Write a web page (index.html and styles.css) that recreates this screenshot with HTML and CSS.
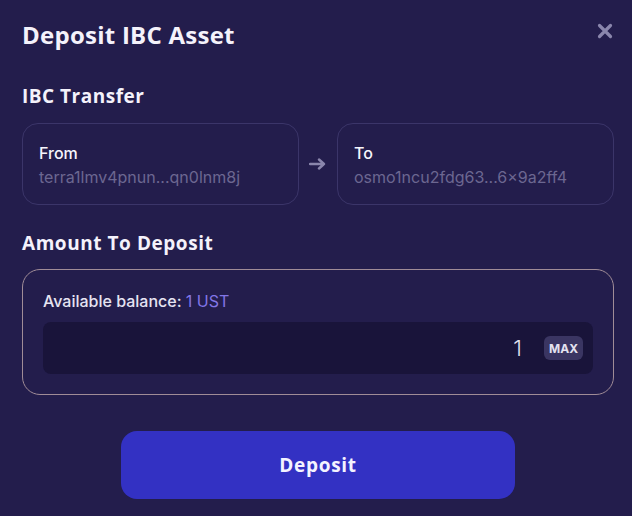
FILE: index.html
```html
<!DOCTYPE html>
<html>
<head>
<meta charset="utf-8">
<link rel="stylesheet" href="styles.css">
</head>
<body>
<div class="modal">
  <div class="header">
    <h1 class="title">Deposit IBC Asset</h1>
    <svg class="close" width="16" height="16" viewBox="0 0 16 16"><path d="M2.5 2.5 L13.5 13.5 M13.5 2.5 L2.5 13.5" stroke="#8a86ac" stroke-width="3.2" stroke-linecap="round"/></svg>
  </div>
  <h2 class="section">IBC Transfer</h2>
  <div class="transfer">
    <div class="card">
      <div class="label">From</div>
      <div class="addr">terra1lmv4pnun...qn0lnm8j</div>
    </div>
    <svg class="arrow" width="18" height="12" viewBox="0 0 18 12"><path d="M1 6 H15 M10 1.5 L15 6 L10 10.5" stroke="#8a86ac" stroke-width="2.4" fill="none" stroke-linecap="round" stroke-linejoin="round"/></svg>
    <div class="card">
      <div class="label">To</div>
      <div class="addr">osmo1ncu2fdg63...6×9a2ff4</div>
    </div>
  </div>
  <h2 class="section amount-title">Amount To Deposit</h2>
  <div class="amount">
    <div class="balance">Available balance: <span class="ust">1 UST</span></div>
    <div class="input">
      <span class="value">1</span>
      <span class="max">MAX</span>
    </div>
  </div>
  <div class="actions">
    <button class="deposit">Deposit</button>
  </div>
</div>
</body>
</html>
```
FILE: styles.css
```css
html, body {
  margin: 0;
  padding: 0;
  background: #231d4c;
}
body {
  width: 632px;
  height: 516px;
  overflow: hidden;
  font-family: Inter, "Noto Sans", sans-serif;
  color: #ffffff;
}
.modal {
  padding: 19px 18px 0 22px;
}
.header {
  display: flex;
  justify-content: space-between;
  align-items: flex-start;
}
.title {
  margin: 0;
  font-family: "Open Sans", sans-serif;
  font-weight: 700;
  font-size: 24px;
  line-height: 31px;
  letter-spacing: 0.25px;
  color: #f4f2fb;
}
.close {
  margin-top: 4px;
  margin-right: 1px;
}
.section {
  margin: 0;
  font-family: "Open Sans", sans-serif;
  font-weight: 700;
  font-size: 19px;
  line-height: 24px;
  letter-spacing: 0.5px;
  color: #f4f2fb;
}
.header + .section {
  margin-top: 34px;
}
.transfer {
  margin-top: 15px;
  display: flex;
  align-items: center;
  gap: 10px;
}
.card {
  flex: 1;
  height: 82px;
  box-sizing: border-box;
  border: 1px solid #3b3569;
  border-radius: 16px;
  padding: 19px 16px 0 16px;
}
.label {
  font-size: 16px;
  font-weight: 500;
  line-height: 20px;
  color: #f6f5fc;
}
.addr {
  margin-top: 4px;
  font-size: 16px;
  line-height: 20px;
  color: #6c6791;
}
.arrow {
  flex: none;
}
.amount-title {
  margin-top: 26px;
  letter-spacing: 0.55px;
}
.amount {
  margin-top: 14px;
  height: 126px;
  box-sizing: border-box;
  border: 1px solid #a08c97;
  border-radius: 18px;
  padding: 21px 20px 0 20px;
}
.balance {
  font-size: 16px;
  font-weight: 500;
  line-height: 20px;
  color: #e6e4f2;
}
.ust {
  font-weight: 400;
  color: #8276e6;
}
.input {
  margin-top: 11px;
  height: 52px;
  background: #19143a;
  border-radius: 8px;
  display: flex;
  align-items: center;
  justify-content: flex-end;
  padding-right: 10px;
}
.value {
  font-size: 22px;
  font-weight: 300;
  color: #e2e0ee;
  margin-right: 22px;
}
.max {
  background: #3a3562;
  border-radius: 6px;
  height: 24px;
  width: 39px;
  display: flex;
  align-items: center;
  justify-content: center;
  font-size: 12px;
  font-weight: 700;
  color: #e4e2f0;
}
.actions {
  margin-top: 36px;
  display: flex;
  justify-content: center;
}
.deposit {
  width: 394px;
  height: 68px;
  border: none;
  border-radius: 16px;
  background: #3331c3;
  color: #f4f3ff;
  font-family: "Open Sans", sans-serif;
  font-weight: 700;
  font-size: 19px;
  letter-spacing: 0.7px;
}
```
